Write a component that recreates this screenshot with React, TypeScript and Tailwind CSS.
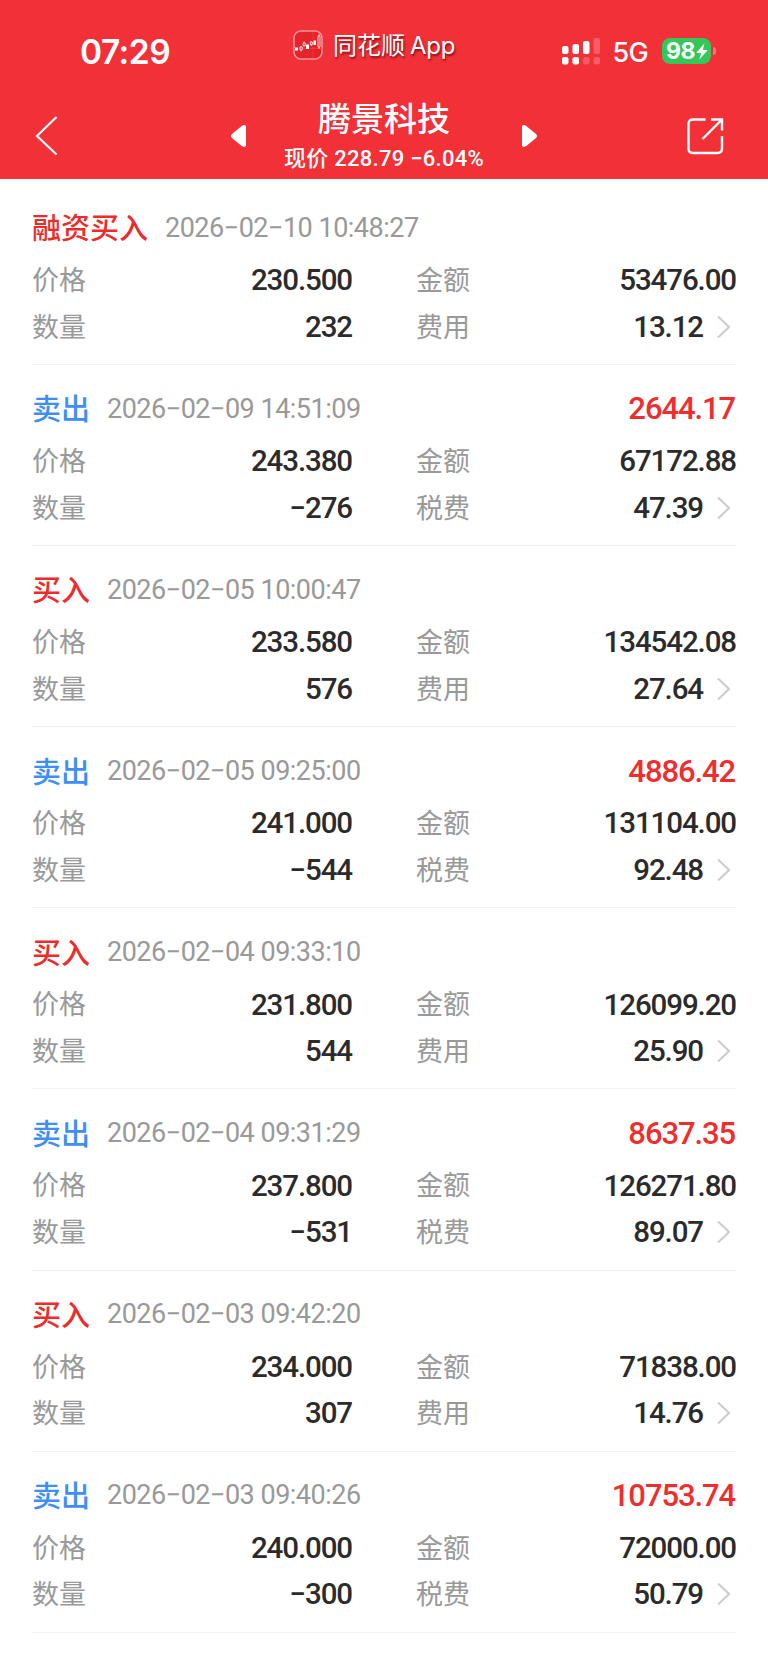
import type { ReactNode } from "react"
import clsx from "clsx"

type Trade = {
    kind: string
    time: string
    price: string
    count: string
    amount: string
    feeLabel: string
    fee: string
    profit?: string
}

const trades: Trade[] = [
    { kind: "融资买入", time: "2026−02−10 10:48:27", price: "230.500", count: "232", amount: "53476.00", feeLabel: "费用", fee: "13.12" },
    { kind: "卖出", time: "2026−02−09 14:51:09", price: "243.380", count: "−276", amount: "67172.88", feeLabel: "税费", fee: "47.39", profit: "2644.17" },
    { kind: "买入", time: "2026−02−05 10:00:47", price: "233.580", count: "576", amount: "134542.08", feeLabel: "费用", fee: "27.64" },
    { kind: "卖出", time: "2026−02−05 09:25:00", price: "241.000", count: "−544", amount: "131104.00", feeLabel: "税费", fee: "92.48", profit: "4886.42" },
    { kind: "买入", time: "2026−02−04 09:33:10", price: "231.800", count: "544", amount: "126099.20", feeLabel: "费用", fee: "25.90" },
    { kind: "卖出", time: "2026−02−04 09:31:29", price: "237.800", count: "−531", amount: "126271.80", feeLabel: "税费", fee: "89.07", profit: "8637.35" },
    { kind: "买入", time: "2026−02−03 09:42:20", price: "234.000", count: "307", amount: "71838.00", feeLabel: "费用", fee: "14.76" },
    { kind: "卖出", time: "2026−02−03 09:40:26", price: "240.000", count: "−300", amount: "72000.00", feeLabel: "税费", fee: "50.79", profit: "10753.74" },
]

function Field({ label, value, children }: { label: string; value: string; children?: ReactNode }) {
    return (
        <div className="flex h-[46.5px] items-center">
            <span className="pt-[2px] text-[27px] text-[#999999]">{label}</span>
            <span className="ml-auto text-[29.5px] font-medium tracking-[-1.1px] text-[#2b2b2b]">{value}</span>
            {children}
        </div>
    )
}

function TradeItem({ trade }: { trade: Trade }) {
    return (
        <li className="h-[181.1px] border-b border-[#f2f2f2] pt-[22px]">
            <div className="flex h-[44px] items-center">
                <span
                    className={clsx(
                        "pt-[4px] text-[29px] font-medium",
                        trade.kind === "卖出" ? "text-[#3d8ff5]" : "text-[#ee2b2b]"
                    )}
                >
                    {trade.kind}
                </span>
                <time className="ml-[17px] text-[27px] tracking-[-0.5px] text-[#999999]">{trade.time}</time>
                {trade.profit && (
                    <span className="mr-px ml-auto pt-px text-[31px] font-medium tracking-[-1.1px] text-[#f02d2d]">
                        {trade.profit}
                    </span>
                )}
            </div>
            <div className="mt-[7px] grid grid-cols-2 gap-x-[64px]">
                <Field label="价格" value={trade.price} />
                <Field label="金额" value={trade.amount} />
                <Field label="数量" value={trade.count} />
                <Field label={trade.feeLabel} value={trade.fee}>
                    <svg className="mr-[6px] ml-[14px] h-[24px] w-[13px]" viewBox="0 0 13 24" fill="none" stroke="#cccccc" strokeWidth="2">
                        <path d="M1 1.5 12 12 1 22.5" />
                    </svg>
                </Field>
            </div>
        </li>
    )
}

function StatusBar() {
    return (
        <div className="flex h-[92px] items-start justify-between pr-[52px] pl-[80px] text-white">
            <span className="mt-[31px] w-[213px] font-[Inter] text-[33.5px] leading-[42px] font-semibold tracking-[-0.5px]">07:29</span>
            <div className="mt-[30px] flex h-[30px] flex-1 items-center">
                <svg className="mt-[-1px] h-[30px] w-[30px]" viewBox="0 0 30 30" fill="none">
                    <rect x="1" y="1" width="28" height="28" rx="7" fill="#e4242a" stroke="#f99498" strokeWidth="1.5" />
                    <path d="M1 18.5H29M20 2V28" stroke="#f14147" strokeWidth="0.6" />
                    <path fill="#fff" d="M2 17.5h3v3H2zM13 14.5h3V19h-3zM20.5 10.5h2.5v4.5h-2.5z" />
                    <path stroke="#fff" strokeWidth="0.8" d="M7 17h2.2v3H7zM8 16v1M8 20v1.5M10.2 13h2v3h-2zM11 11.5V13M17.3 12h2v2.5h-2zM18.3 11v1M18.3 14.5V16M25 6h2v11h-2zM26 4v2M26 17v2" />
                </svg>
                <span className="mt-[2px] ml-[10px] text-[24px] leading-[30px] whitespace-nowrap [text-shadow:1px_2px_2px_rgba(60,0,0,0.6)]">
                    同花顺<span className="ml-[5px] font-[Inter] tracking-[-0.2px]">App</span>
                </span>
            </div>
            <svg className="mt-[37px] h-[28px] w-[39px]" viewBox="0 0 39 28" fill="#fff">
                <rect x="0" y="9" width="6.5" height="8" rx="2" />
                <rect x="10.5" y="7" width="6.5" height="10" rx="2" />
                <rect x="21" y="4" width="6.5" height="13" rx="2" />
                <rect x="31.5" y="1" width="6.5" height="16" rx="2" opacity=".22" />
                <rect x="0" y="20" width="6.5" height="7.5" rx="2" />
                <rect x="10.5" y="20" width="6.5" height="7.5" rx="2" />
                <rect x="21" y="20" width="6.5" height="7.5" rx="2.5" opacity=".22" />
                <rect x="31.5" y="20" width="6.5" height="7.5" rx="2.5" opacity=".22" />
            </svg>
            <span className="mt-[38px] ml-[12px] font-[Inter] text-[27px] leading-[30px] font-medium tracking-[-0.7px]">5G</span>
            <div className="mt-[38px] ml-[14px] flex items-center">
                <div className="flex h-[26px] w-[49px] items-center rounded-[8px] bg-[#34c759] pl-[4px]">
                    <span className="font-[Inter] text-[23px] leading-[26px] font-bold tracking-[-0.5px]">98</span>
                    <svg className="ml-px h-[17px] w-[12px] shrink-0" viewBox="0 0 12 17" fill="#fff">
                        <path d="M8.5.3.7 9.3q-.5.8.4.8h4L3.2 16.7l8-9q.5-.8-.4-.8h-4z" />
                    </svg>
                </div>
                <span className="ml-[2px] h-[8px] w-[3px] rounded-r-full bg-[#f7777c]" />
            </div>
        </div>
    )
}

function NavBar() {
    return (
        <div className="flex h-[87px] items-start text-white">
            <svg className="mt-[24px] ml-[35px] h-[40px] w-[23px]" viewBox="0 0 23 40" fill="none" stroke="#fff" strokeWidth="2.2">
                <path d="M21.5 1 2 20 21.5 38.5" />
            </svg>
            <svg className="mt-[33px] ml-[172px] h-[22px] w-[17px]" viewBox="0 0 17 22" fill="#fff">
                <path d="M11.8.9Q13.3-.2 15 .2q1 .3 1 1.8v18q0 1.5-1 1.8-1.7.4-3.2-.7L2.5 13.6Q-.5 11 2.5 8.400z" />
            </svg>
            <div className="flex w-[274px] flex-col items-center">
                <h1 className="mt-[6px] text-[33px] leading-[44px] font-medium">腾景科技</h1>
                <p className="mt-px text-[22px] leading-[32px] font-medium tracking-[0.25px] whitespace-nowrap">现价 228.79 −6.04%</p>
            </div>
            <svg className="mt-[33px] h-[22px] w-[17px] rotate-180" viewBox="0 0 17 22" fill="#fff">
                <path d="M11.8.9Q13.3-.2 15 .2q1 .3 1 1.8v18q0 1.5-1 1.8-1.7.4-3.2-.7L2.5 13.6Q-.5 11 2.5 8.400z" />
            </svg>
            <svg className="mt-[25px] mr-[44px] ml-auto h-[38px] w-[38px]" viewBox="0 0 38 38" fill="none" stroke="#fff" strokeWidth="2.4">
                <path d="M19.5 2.5H7Q2.5 2.5 2.5 7V31.5Q2.5 36 7 36H31.5Q36 36 36 31.5V19" />
                <path d="M25 2.5H36V13.5M36 2.5 16.5 22" />
            </svg>
        </div>
    )
}

export default function App() {
    return (
        <div className="h-[1663px] w-[768px] overflow-hidden bg-white font-[Roboto,'Noto_Sans_CJK_SC',sans-serif]">
            <header className="bg-[#f23038]">
                <StatusBar />
                <NavBar />
            </header>
            <ul className="px-[32px] pt-[5px]">
                {trades.map((trade) => (
                    <TradeItem key={trade.time} trade={trade} />
                ))}
            </ul>
        </div>
    )
}
